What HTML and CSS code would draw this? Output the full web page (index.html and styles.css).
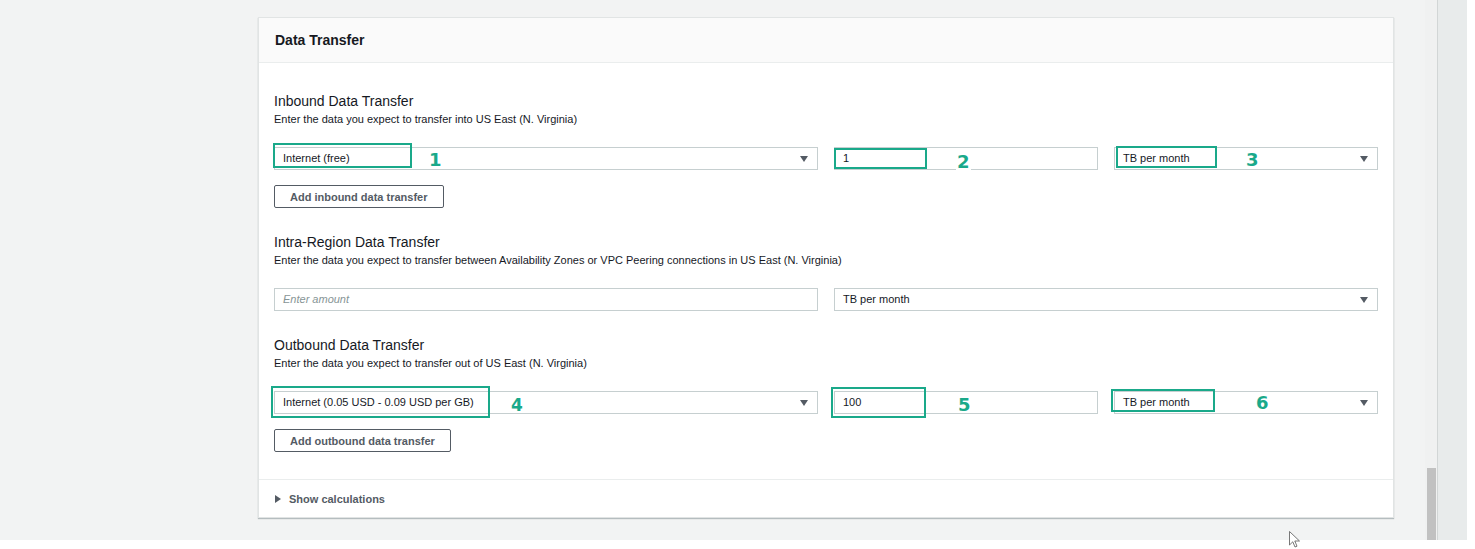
FILE: index.html
```html
<!DOCTYPE html>
<html>
<head>
<meta charset="utf-8">
<link rel="stylesheet" href="styles.css">
</head>
<body>
<div class="screen">
  <div class="viewport">
    <div class="page">
      <div class="card">
        <div class="card-header">Data Transfer</div>
        <div class="card-body">
          <section class="group">
            <h3 class="group-title">Inbound Data Transfer</h3>
            <p class="group-desc">Enter the data you expect to transfer into US East (N. Virginia)</p>
            <div class="row row3">
              <div class="field select">Internet (free)<span class="caret"></span>
                <span class="mark m1"></span><span class="num n1">1</span>
              </div>
              <div class="field input">1
                <span class="mark m2"></span><span class="num n2">2</span>
              </div>
              <div class="field select">TB per month<span class="caret"></span>
                <span class="mark m3"></span><span class="num n3">3</span>
              </div>
            </div>
            <button class="btn">Add inbound data transfer</button>
          </section>

          <section class="group">
            <h3 class="group-title">Intra-Region Data Transfer</h3>
            <p class="group-desc">Enter the data you expect to transfer between Availability Zones or VPC Peering connections in US East (N. Virginia)</p>
            <div class="row row2">
              <div class="field input placeholder">Enter amount</div>
              <div class="field select">TB per month<span class="caret"></span></div>
            </div>
          </section>

          <section class="group">
            <h3 class="group-title">Outbound Data Transfer</h3>
            <p class="group-desc">Enter the data you expect to transfer out of US East (N. Virginia)</p>
            <div class="row row3">
              <div class="field select">Internet (0.05 USD - 0.09 USD per GB)<span class="caret"></span>
                <span class="mark m4"></span><span class="num n4">4</span>
              </div>
              <div class="field input">100
                <span class="mark m5"></span><span class="num n5">5</span>
              </div>
              <div class="field select">TB per month<span class="caret"></span>
                <span class="mark m6"></span><span class="num n6">6</span>
              </div>
            </div>
            <button class="btn">Add outbound data transfer</button>
          </section>
        </div>
        <div class="card-footer">
          <span class="tri"></span>
          <span class="footer-label">Show calculations</span>
        </div>
      </div>
      <svg class="cursor" width="12" height="18" viewBox="0 0 12 18">
        <path d="M0.5 0.5 L0.5 14 L3.8 10.8 L6 16 L8 15.2 L5.8 10 L10.5 10 Z" fill="#ffffff" stroke="#555" stroke-width="0.8"/>
      </svg>
    </div>
    <div class="track"><div class="thumb"></div></div>
    <div class="divider"></div>
    <div class="sidepanel"></div>
    <div class="edge"></div>
  </div>
  <div class="bottom-strip"></div>
</div>
</body>
</html>
```

FILE: styles.css
```css
* { box-sizing: border-box; }
html, body { margin: 0; padding: 0; background: #ffffff; }
body {
  font-family: "Liberation Sans", Arial, sans-serif;
  color: #16191f;
  width: 1475px;
  height: 549px;
  overflow: hidden;
}
.screen { display: flex; flex-direction: column; width: 1475px; height: 549px; }
.viewport { display: flex; height: 540px; }
.page {
  position: relative;
  flex: 0 0 1425px;
  background: #f2f3f3;
  padding: 17px 0 0 258px;
}
.track {
  flex: 0 0 12px;
  background: #f0f1f1;
  display: flex;
  flex-direction: column;
  justify-content: flex-end;
  padding: 0 1px 0 2px;
}
.thumb { height: 72px; background: #c1c1c1; }
.divider { flex: 0 0 1px; background: #d2d6d6; }
.sidepanel { flex: 0 0 29px; background: #e8ebeb; }
.edge { flex: 1; background: #ffffff; }
.bottom-strip { flex: 1; background: #ffffff; }

.card {
  width: 1136px;
  background: #ffffff;
  border: 1px solid #e1e4e4;
  box-shadow: 0 1px 1px rgba(0, 28, 36, 0.25);
}
.card-header {
  height: 45px;
  background: #fafafa;
  border-bottom: 1px solid #eaeded;
  padding: 0 16px;
  display: flex;
  align-items: center;
  font-size: 14px;
  font-weight: bold;
  color: #16191f;
}
.card-body { padding: 28px 15px 27px 15px; }
.group + .group { margin-top: 24px; }
.group-title {
  margin: 0;
  font-size: 14px;
  line-height: 20px;
  font-weight: normal;
  color: #16191f;
}
.group-desc {
  margin: 0;
  font-size: 11px;
  line-height: 16px;
  color: #16191f;
}
.row {
  display: grid;
  column-gap: 16px;
  margin-top: 20px;
}
.row3 { grid-template-columns: 544px 264px 264px; }
.row2 { grid-template-columns: 544px 1fr; }
.field {
  position: relative;
  height: 23px;
  border: 1px solid #c6cfd0;
  background: #ffffff;
  font-size: 11px;
  line-height: 21px;
  padding: 0 8px;
  color: #16191f;
  white-space: nowrap;
}
.placeholder { color: #879596; font-style: italic; }
.caret {
  position: absolute;
  right: 9px;
  top: 8px;
  width: 0;
  height: 0;
  border-left: 4px solid transparent;
  border-right: 4px solid transparent;
  border-top: 6px solid #545b64;
}
.btn {
  display: block;
  margin-top: 15px;
  height: 23px;
  padding: 0 15px;
  border: 1px solid #545b64;
  border-radius: 2px;
  background: #ffffff;
  font-family: "Liberation Sans", Arial, sans-serif;
  font-size: 11px;
  font-weight: bold;
  color: #545b64;
}
.card-footer {
  border-top: 1px solid #eaeded;
  height: 38px;
  display: flex;
  align-items: center;
  padding: 0 16px;
  gap: 8px;
}
.tri {
  width: 0;
  height: 0;
  border-top: 4px solid transparent;
  border-bottom: 4px solid transparent;
  border-left: 6px solid #545b64;
}
.footer-label { font-size: 11px; font-weight: bold; color: #545b64; }

/* annotation overlays */
.mark {
  position: absolute;
  border: 2px solid #1aa98a;
}
.num {
  position: absolute;
  font-family: "DejaVu Sans", "Liberation Sans", sans-serif;
  font-size: 18px;
  line-height: 14px;
  height: 14px;
  font-weight: bold;
  color: #1aa98a;
  background: #ffffff;
  padding: 0 1px;
}
.m1 { left: -2px; top: -5px; width: 139px; height: 25px; }
.n1 { left: 153px; top: 5px; }
.m2 { left: -1px; top: 0px; width: 93px; height: 21px; }
.n2 { left: 121px; top: 7px; height: 15px; }
.m3 { left: 1px; top: -2px; width: 101px; height: 22px; }
.n3 { left: 130px; top: 5px; }
.m4 { left: -4px; top: -6px; width: 219px; height: 32px; }
.n4 { left: 235px; top: 6px; font-size: 17px; }
.m5 { left: -4px; top: -5px; width: 95px; height: 31px; }
.n5 { left: 122px; top: 6px; }
.m6 { left: -4px; top: -3px; width: 104px; height: 23px; }
.n6 { left: 140px; top: 4px; }

.cursor { position: absolute; left: 1289px; top: 531px; }
```
